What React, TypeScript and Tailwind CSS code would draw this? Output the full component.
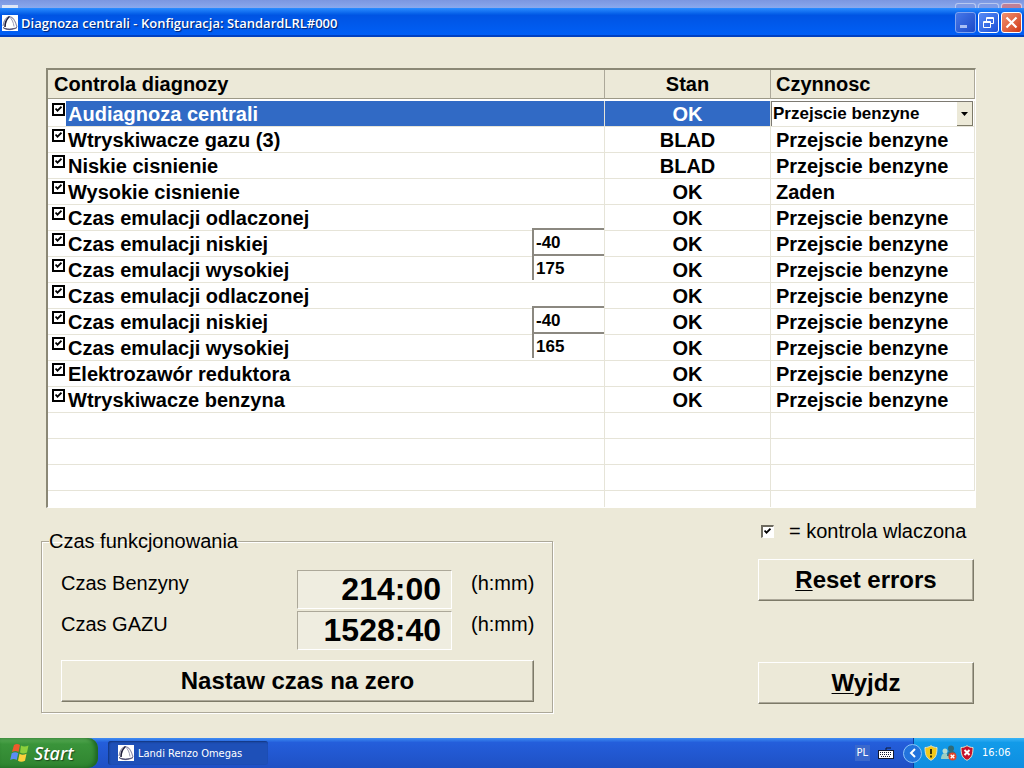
import type { ReactNode } from 'react'

type Row = { name: string; state: string; action: string; value?: string }

const rows: Row[] = [
  { name: 'Audiagnoza centrali', state: 'OK', action: 'Przejscie benzyne' },
  { name: 'Wtryskiwacze gazu (3)', state: 'BLAD', action: 'Przejscie benzyne' },
  { name: 'Niskie cisnienie', state: 'BLAD', action: 'Przejscie benzyne' },
  { name: 'Wysokie cisnienie', state: 'OK', action: 'Zaden' },
  { name: 'Czas emulacji odlaczonej', state: 'OK', action: 'Przejscie benzyne' },
  { name: 'Czas emulacji niskiej', state: 'OK', action: 'Przejscie benzyne', value: '-40' },
  { name: 'Czas emulacji wysokiej', state: 'OK', action: 'Przejscie benzyne', value: '175' },
  { name: 'Czas emulacji odlaczonej', state: 'OK', action: 'Przejscie benzyne' },
  { name: 'Czas emulacji niskiej', state: 'OK', action: 'Przejscie benzyne', value: '-40' },
  { name: 'Czas emulacji wysokiej', state: 'OK', action: 'Przejscie benzyne', value: '165' },
  { name: 'Elektrozawór reduktora', state: 'OK', action: 'Przejscie benzyne' },
  { name: 'Wtryskiwacze benzyna', state: 'OK', action: 'Przejscie benzyne' },
]

function AppIcon() {
  return (
    <svg width="16" height="16" viewBox="0 0 16 16" className="shrink-0" aria-hidden="true">
      <rect width="16" height="16" fill="#fff" />
      <path d="M1 11C2 5 4 2 7.500 1.500 11 2 13.500 6 15 12" fill="none" stroke="#8e8ea8" strokeWidth="1.200" />
      <path d="M7.500 1.500C4.500 4 3 8 3 12" fill="none" stroke="#1f1f3c" strokeWidth="1.600" />
      <path d="M7.500 2c2.500 2 4 5.500 4.500 9.500" fill="none" stroke="#9c9cb4" strokeWidth="1" />
      <path d="M1 12.500c3 1.800 9 2 14 0-4 2.800-11 3-14 0z" fill="#3c3c64" stroke="#3c3c64" strokeWidth=".6" />
    </svg>
  )
}

function Tick() {
  return (
    <svg width="7" height="7" viewBox="0 0 7 7" className="pointer-events-none absolute top-[3px] left-[3px]" aria-hidden="true">
      <path d="M.5 2.500L2.500 4.700 6.500 .7" fill="none" stroke="#000" strokeWidth="1.800" />
    </svg>
  )
}

function PushButton({ children, className = '' }: { children: ReactNode; className?: string }) {
  return (
    <button
      type="button"
      className={`h-[42px] w-full border border-t-white border-r-[#7d7a68] border-b-[#7d7a68] border-l-white text-2xl leading-none font-bold shadow-[inset_-1px_-1px_0_#aca899] ${className}`}
    >
      {children}
    </button>
  )
}

function WindowTitle() {
  const base = 'flex size-[21px] items-center justify-center rounded-[3px] border'
  return (
    <header>
      <div className="flex h-2 items-end justify-between overflow-hidden bg-linear-to-b from-[#7b96e0] to-[#8aa9ee] px-0.5">
        <div className="h-[3px] w-4 bg-[#dfe6f6]" />
        <div className="flex gap-0.5">
          <div className="h-[5px] w-[21px] rounded-t-[3px] border border-b-0 border-[#b8c8f0] bg-[#7f9be6]" />
          <div className="h-[5px] w-[21px] rounded-t-[3px] border border-b-0 border-[#b8c8f0] bg-[#7f9be6]" />
          <div className="h-[5px] w-[21px] rounded-t-[3px] border border-b-0 border-[#d8c8e0] bg-[#c07f96]" />
        </div>
      </div>
      <div className="flex h-[29px] items-center bg-linear-to-b from-[#2a8cff] via-[#0054e3] via-25% to-[#0060f8] pr-0.5 pl-0.5 shadow-[inset_0_-2px_0_#0040c0]">
        <AppIcon />
        <h1 className="ml-[3px] flex-1 pt-0.5 font-['Open_Sans',sans-serif] text-[13px] font-semibold text-white [text-shadow:1px_1px_1px_#00206b]">
          Diagnoza centrali - Konfiguracja: StandardLRL#000
        </h1>
        <div className="flex gap-0.5">
          <button type="button" aria-label="Minimize" className={`${base} border-[#7ea3f0] bg-linear-to-br from-[#4677e8] to-[#1c49c8]`}>
            <svg width="19" height="19"><path d="M4 12h7v3H4z" fill="#a9bff5" /></svg>
          </button>
          <button type="button" aria-label="Restore" className={`${base} border-white bg-linear-to-br from-[#5a8cf5] to-[#1c4fd8]`}>
            <svg width="19" height="19" fill="none" stroke="#fff">
              <path d="M7.500 8V4.500h7v6H12M7 5.500h8" />
              <path d="M4.500 8.500h7v6h-7zM4 9.500h8" />
            </svg>
          </button>
          <button type="button" aria-label="Close" className={`${base} border-white bg-linear-to-br from-[#f0906f] to-[#d0360f]`}>
            <svg width="19" height="19"><path d="M4.500 4.500l10 10M14.500 4.500l-10 10" stroke="#fff" strokeWidth="2.200" /></svg>
          </button>
        </div>
      </div>
    </header>
  )
}

function DiagnosisTable() {
  const cell = 'h-[26px] border-r border-b border-[#e6e4d8] p-0'
  const head = 'h-[29px] border-r border-b border-[#aca899] border-b-[#9c9987] bg-[#ece9d8] p-0 font-bold'
  return (
    <div className="ml-[5px] border-t-2 border-r border-b border-l-2 border-t-[#8b8876] border-r-white border-b-white border-l-[#8b8876] bg-white">
      <table className="w-full table-fixed border-separate border-spacing-0 text-xl leading-[27px] font-bold">
        <colgroup>
          <col />
          <col className="w-[166px]" />
          <col className="w-[204px]" />
        </colgroup>
        <thead>
          <tr>
            <th className={`${head} pl-1.5 text-left`}>Controla diagnozy</th>
            <th className={`${head} text-center`}>Stan</th>
            <th className={`${head} pl-[5px] text-left`}>Czynnosc</th>
          </tr>
          <tr aria-hidden="true">
            <td className="h-0.5 p-0" colSpan={3} />
          </tr>
        </thead>
        <tbody>
          {rows.map((row, i) => (
            <tr key={i}>
              <td className={cell}>
                <div className="flex h-[25px] pl-1">
                  <span className="relative mt-0.5 size-[13px] shrink-0">
                    <input id={`check-${i}`} type="checkbox" defaultChecked className="block size-[13px] appearance-none border-2 border-black bg-white" />
                    <Tick />
                  </span>
                  <label htmlFor={`check-${i}`} className={`ml-px flex-1 pl-0.5 ${i === 0 ? 'bg-[#316ac5] text-white' : ''}`}>
                    {row.name}
                  </label>
                  {row.value && (
                    <input
                      type="text"
                      aria-label={row.name}
                      defaultValue={row.value}
                      className="-mt-[3px] h-[26px] w-[72px] border-t-2 border-l-2 border-[#8b8880] bg-white pl-0.5 text-[17px] font-bold outline-none"
                    />
                  )}
                </div>
              </td>
              <td className={`${cell} text-center ${i === 0 ? 'bg-[#316ac5] text-white' : ''}`}>
                <div className="h-[25px]">{row.state}</div>
              </td>
              <td className={cell}>
                {i === 0 ? (
                  <div className="relative mr-px h-[25px] border-t border-l border-[#7d7a72] bg-white">
                    <select aria-label="Czynnosc" defaultValue={row.action} className="block h-6 w-full appearance-none pl-px text-[17px] leading-6 font-bold outline-none">
                      <option>Przejscie benzyne</option>
                      <option>Zaden</option>
                    </select>
                    <span className="pointer-events-none absolute top-0 right-0 flex h-6 w-4 items-center justify-center border-r border-b border-[#7d7a68] bg-[#ece9d8]">
                      <svg width="7" height="4"><path d="M0 0h7L3.500 4z" fill="#000" /></svg>
                    </span>
                  </div>
                ) : (
                  <div className="h-[25px] pl-[5px]">{row.action}</div>
                )}
              </td>
            </tr>
          ))}
          {[0, 1, 2].map((i) => (
            <tr key={`empty-${i}`}>
              <td className={cell} />
              <td className={cell} />
              <td className={cell} />
            </tr>
          ))}
          <tr>
            <td className="h-4 border-r border-[#e6e4d8] p-0" />
            <td className="h-4 border-r border-[#e6e4d8] p-0" />
            <td className="h-4 p-0" />
          </tr>
        </tbody>
      </table>
    </div>
  )
}

function TimeRow({ label, value }: { label: string; value: string }) {
  return (
    <div className="flex items-start leading-[26px]">
      <span className="flex-1">{label}</span>
      <output aria-label={label} className="h-[39px] w-[155px] border border-t-[#aca899] border-r-white border-b-white border-l-[#aca899] bg-[#efede0] pr-2.5 text-right text-[32px] leading-[37px] font-bold">
        {value}
      </output>
      <span className="w-[82px] pl-[19px]">(h:mm)</span>
    </div>
  )
}

function Shield({ fill, children }: { fill: string; children: ReactNode }) {
  return (
    <svg width="14" height="16" viewBox="0 0 14 16" aria-hidden="true">
      <path d="M7 .7C5 2 3 2.500 1 2.500 1 9 2 13 7 15.300 12 13 13 9 13 2.500 11 2.500 9 2 7 .7z" fill={fill} stroke="#e3e0c4" strokeWidth="1" />
      {children}
    </svg>
  )
}

function Taskbar() {
  return (
    <footer className="flex h-[30px] items-stretch bg-linear-to-b from-[#3f8cf3] via-[#245edb] via-15% to-[#1f50c4] text-white">
      <button type="button" className="flex w-[98px] items-center rounded-r-[10px] bg-linear-to-b from-[#5fb35c] via-[#3a943a] via-20% to-[#2f8430] pl-2.5 shadow-[inset_-3px_0_4px_#1d6420]">
        <svg width="20" height="20" viewBox="0 0 20 20" aria-hidden="true">
          <path d="M4 2c2-1.300 4-1.300 6 0L8.500 9c-2-1.300-4-1.300-6.500 0z" fill="#ee5a2c" />
          <path d="M11 2.500c2 1.300 4.500 1.300 7.500 0L17 9.500c-2.500 1.300-5 1.300-7 0z" fill="#8bd03c" />
          <path d="M1.700 10.200c2.500-1.300 4.500-1.300 6.500 0L6.700 17c-2-1.300-4-1.300-6.500 0z" fill="#5b8df5" />
          <path d="M9.500 10.700c2 1.300 4.500 1.300 7 0l-1.500 7c-2.500 1.300-5 1.300-7 0z" fill="#fbd13c" />
        </svg>
        <span className="ml-1 font-['Noto_Sans',sans-serif] text-lg leading-none font-medium italic [text-shadow:1px_1px_1px_#1c4a1c]">Start</span>
      </button>
      <button type="button" className="my-[3px] ml-2.5 flex w-40 items-center rounded-[3px] bg-[#1e50b8] pl-2.5 text-left font-['DejaVu_Sans_Condensed','DejaVu_Sans',sans-serif] text-[11px] shadow-[inset_1px_1px_2px_#12347c]">
        <AppIcon />
        <span className="ml-1 pt-0.5">Landi Renzo Omegas</span>
      </button>
      <div className="ml-auto flex items-center font-['DejaVu_Sans_Condensed','DejaVu_Sans',sans-serif] text-[11px]">
        <span className="mr-2 bg-[#3a68cc] px-0.5 leading-4">PL</span>
        <svg width="16" height="12" viewBox="0 0 16 12" aria-hidden="true">
          <path d="M8 3V1h5" fill="none" stroke="#101830" />
          <rect x=".5" y="3.500" width="15" height="8" fill="#fff" stroke="#101830" />
          <path d="M2 5.500h12M2 7.500h12M3 9.500h10" stroke="#101830" strokeDasharray="1 1" />
        </svg>
      </div>
      <div className="ml-[19px] flex w-[111px] items-center bg-linear-to-b from-[#37b4f7] via-[#129be9] via-15% to-[#0f8ee0] font-['DejaVu_Sans_Condensed','DejaVu_Sans',sans-serif] text-[11px] shadow-[inset_1px_0_0_#0c3f9c]">
        <button type="button" aria-label="Show hidden icons" className="-ml-2.5 flex size-[19px] shrink-0 items-center justify-center rounded-full border border-[#8cc4f8] bg-[#2273dc]">
          <svg width="9" height="10" fill="none" stroke="#fff" strokeWidth="2"><path d="M7 1L3 5l4 4" /></svg>
        </button>
        <div className="ml-0.5 flex gap-[3px]">
          <Shield fill="#f2c81a">
            <path d="M7 4v5M7 10.500v2" stroke="#2a2408" strokeWidth="1.800" />
          </Shield>
          <svg width="16" height="16" viewBox="0 0 16 16" aria-hidden="true">
            <circle cx="4" cy="6" r="2.500" fill="#b8dccf" />
            <path d="M0 14c0-8 8-8 8 0z" fill="#9ccfc4" />
            <circle cx="10" cy="3.500" r="3" fill="#2f6a78" />
            <path d="M6 11c0-7 9-7 9 0z" fill="#2d7080" />
            <circle cx="11.500" cy="11.500" r="4" fill="#e0442a" />
            <path d="M9.700 9.700l3.600 3.600M13.300 9.700l-3.600 3.600" stroke="#fff" strokeWidth="1.400" />
          </svg>
          <Shield fill="#c8102a">
            <path d="M4.500 5l5 5M9.500 5l-5 5" stroke="#fff" strokeWidth="2" />
          </Shield>
        </div>
        <time className="ml-2">16:06</time>
      </div>
    </footer>
  )
}

export default function App() {
  return (
    <div className="flex min-h-screen flex-col bg-[#ece9d8] font-['Liberation_Sans',Arial,sans-serif] text-black">
      <WindowTitle />
      <main className="flex-1 pt-[31px] pr-12 pb-6 pl-[41px]">
        <DiagnosisTable />
        <div className="mt-[11px] flex items-start justify-between text-xl leading-6">
          <fieldset className="mt-2.5 w-[512px] border border-[#aca899] pr-[18px] pb-2.5 pl-[19px] shadow-[1px_1px_0_#fff,inset_1px_1px_0_#fff]">
            <legend className="-ml-3">Czas funkcjonowania</legend>
            <div className="flex flex-col gap-0.5 pt-[17px] pb-2.5">
              <TimeRow label="Czas Benzyny" value="214:00" />
              <TimeRow label="Czas GAZU" value="1528:40" />
            </div>
            <PushButton>Nastaw czas na zero</PushButton>
          </fieldset>
          <div className="mr-0.5 w-[216px]">
            <div className="flex items-center gap-[15px] pl-[3px]">
              <span className="relative size-[13px] shrink-0">
                <input id="enabled" type="checkbox" defaultChecked className="block size-[13px] appearance-none border border-t-2 border-l-2 border-t-[#6d6a5e] border-r-white border-b-white border-l-[#6d6a5e] bg-white" />
                <Tick />
              </span>
              <label htmlFor="enabled" className="whitespace-nowrap">= kontrola wlaczona</label>
            </div>
            <PushButton className="mt-4">
              <span className="underline decoration-1 underline-offset-2">R</span>eset errors
            </PushButton>
            <PushButton className="mt-[61px]">
              <span className="underline decoration-1 underline-offset-2">W</span>yjdz
            </PushButton>
          </div>
        </div>
      </main>
      <Taskbar />
    </div>
  )
}
